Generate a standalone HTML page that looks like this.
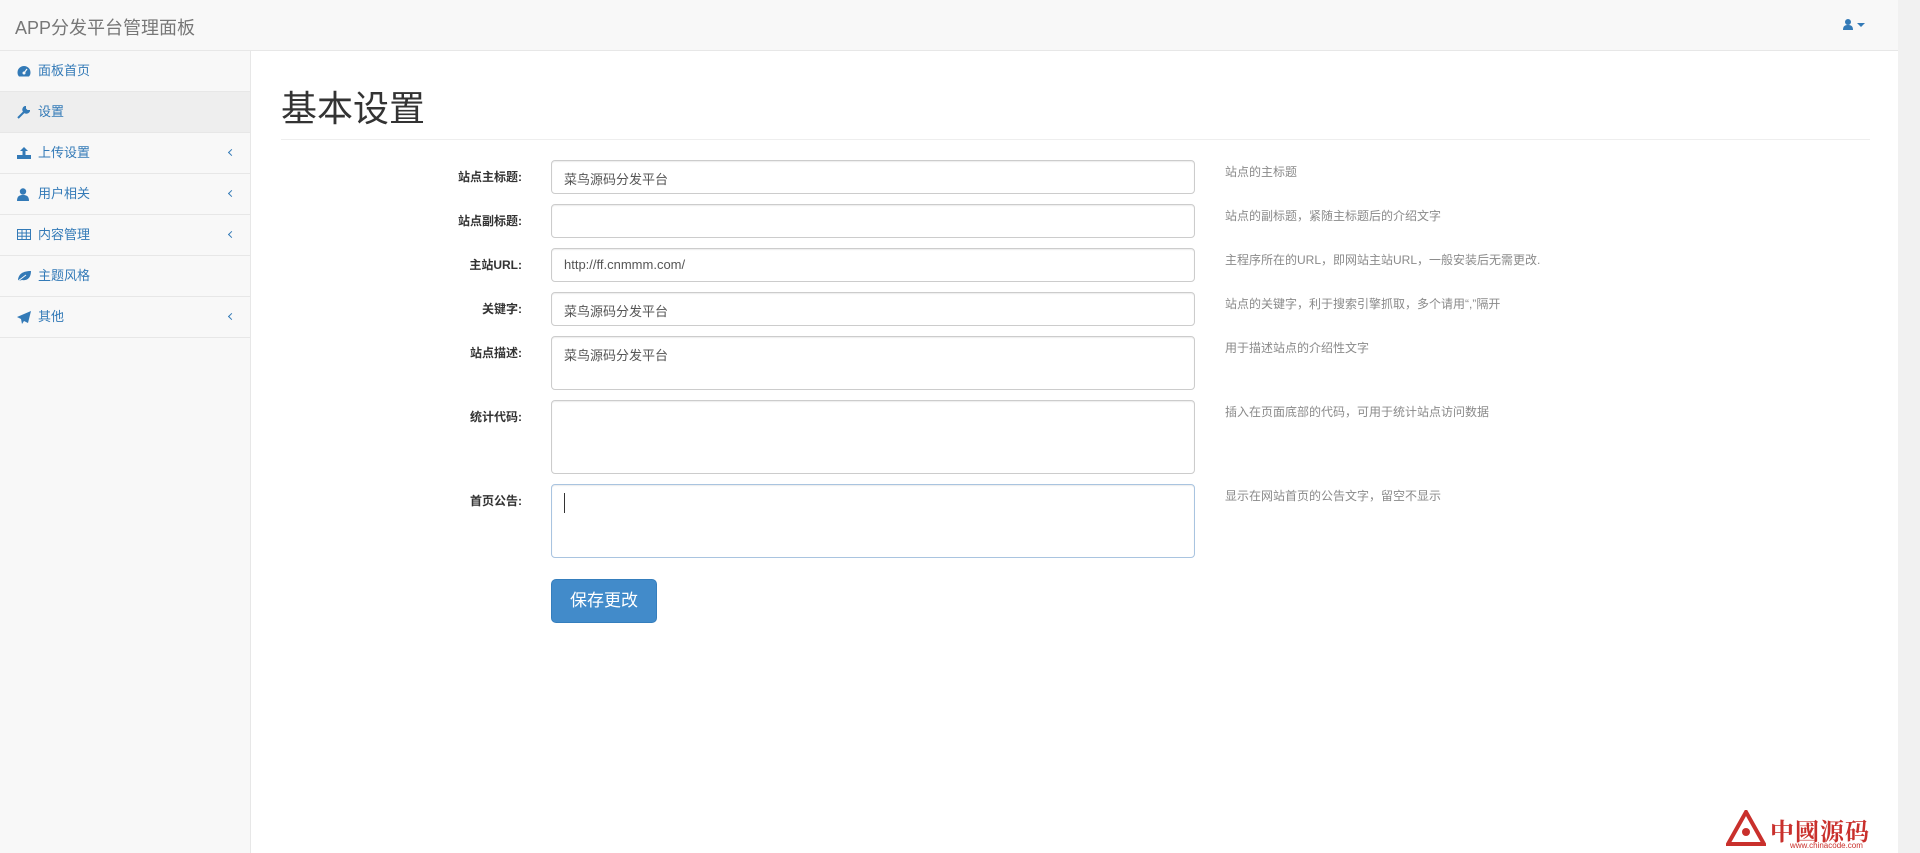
<!DOCTYPE html>
<html><head><meta charset="utf-8"><style>
*{box-sizing:border-box;margin:0;padding:0}
body{width:1920px;height:853px;overflow:hidden;background:#fff;font-family:"Liberation Sans","Noto Sans CJK SC",sans-serif;font-size:14px;color:#333;position:relative}
.nav{position:absolute;left:0;top:0;width:1898px;height:51px;background:#f8f8f8;border-bottom:1px solid #e7e7e7}
.brand{position:absolute;left:15px;top:14px;font-size:18px;color:#777}
.user{position:absolute;left:1843px;top:19px}
.side{position:absolute;left:0;top:51px;width:251px;height:802px;background:#f8f8f8;border-right:1px solid #e7e7e7}
.item{height:41px;border-bottom:1px solid #e7e7e7;color:#337ab7;font-size:13px;line-height:40px;padding-left:38px;position:relative}
.item.act{background:#eee}
.item svg{position:absolute;left:17px;top:14px}
.item .ar{position:absolute;left:229px;top:17px;width:5px;height:5px;border-left:1px solid #337ab7;border-bottom:1px solid #337ab7;transform:rotate(45deg)}
.sb{position:absolute;left:1898px;top:0;width:22px;height:853px;background:#f1f1f1}
h1{position:absolute;left:281px;top:88px;font-size:36px;font-weight:400;color:#333;line-height:42px}
.hr{position:absolute;left:281px;top:139px;width:1589px;border-top:1px solid #eee}
.lbl{position:absolute;width:200px;left:322px;text-align:right;font-weight:bold;font-size:12px;color:#333}
.in{position:absolute;left:551px;width:644px;border:1px solid #ccc;border-radius:4px;background:#fff;box-shadow:inset 0 1px 1px rgba(0,0,0,.075);padding:8px 12px;font-size:13px;color:#555}
.help{position:absolute;left:1225px;font-size:12px;color:#8a8a8a}
.btn{position:absolute;left:551px;top:579px;width:106px;height:44px;background:#428bca;border:1px solid #357ebd;border-radius:5px;color:#fff;font-size:17px;line-height:42px;text-align:center}
.wm{position:absolute;left:1770px;top:812px;color:#c9302c;font-size:24px;font-weight:bold;font-family:"Noto Serif CJK SC",serif;letter-spacing:1px}
.wm2{position:absolute;left:1790px;top:841px;color:#c9302c;font-size:8px}
</style></head><body>
<div class="nav"><div class="brand">APP分发平台管理面板</div>
<svg class="user" width="28" height="12" viewBox="0 0 28 12"><circle cx="5" cy="3" r="3" fill="#337ab7"/><path d="M0 11c0-4 2-5 5-5s5 1 5 5z" fill="#337ab7"/><path d="M14 4h8l-4 4z" fill="#337ab7"/></svg></div>
<div class="side">
<div class="item"><svg width="14" height="12" viewBox="0 0 14 12"><path d="M7 1a6.5 6.5 0 0 0-6.5 6.5c0 1.5.5 3 1.5 4h10c1-1 1.5-2.5 1.5-4A6.5 6.5 0 0 0 7 1z" fill="#337ab7"/><circle cx="7" cy="8" r="1.5" fill="#f8f8f8"/><path d="M7 8l3-4" stroke="#f8f8f8" stroke-width="1.2"/></svg>面板首页</div>
<div class="item act"><svg width="13" height="13" viewBox="0 0 13 13"><path d="M1 12l6-6M8 1a3 3 0 1 0 4 4l-2 0-2-2z" stroke="#337ab7" stroke-width="2" fill="#337ab7"/></svg>设置</div>
<div class="item"><svg width="14" height="12" viewBox="0 0 14 12"><path d="M7 0l4 4H8.5v4h-3V4H3z" fill="#337ab7"/><rect x="0" y="8" width="14" height="4" fill="#337ab7"/></svg>上传设置<span class="ar"></span></div>
<div class="item"><svg width="12" height="13" viewBox="0 0 12 13"><circle cx="6" cy="3.5" r="3.2" fill="#337ab7"/><path d="M0 13c0-5 2.5-6 6-6s6 1 6 6z" fill="#337ab7"/></svg>用户相关<span class="ar"></span></div>
<div class="item"><svg width="14" height="11" viewBox="0 0 14 11"><path d="M.5.5h13v10H.5zM.5 4h13M.5 7.3h13M5 .5v10M9.3.5v10" stroke="#337ab7" fill="none"/></svg>内容管理<span class="ar"></span></div>
<div class="item"><svg width="14" height="12" viewBox="0 0 14 12"><path d="M1 11C1 4 6 1 14 1c0 7-4 10-9 9z" fill="#337ab7"/><path d="M1 11l8-6" stroke="#f8f8f8"/></svg>主题风格</div>
<div class="item"><svg width="14" height="13" viewBox="0 0 14 13"><path d="M14 0L0 6l4 2 1 5 2-3 4 2z" fill="#337ab7"/></svg>其他<span class="ar"></span></div>
</div>
<div class="sb"></div>
<h1>基本设置</h1><div class="hr"></div>

<div class="lbl" style="top:168px">站点主标题:</div>
<div class="in" style="top:160px;height:34px">菜鸟源码分发平台</div>
<div class="help" style="top:163px">站点的主标题</div>

<div class="lbl" style="top:212px">站点副标题:</div>
<div class="in" style="top:204px;height:34px"></div>
<div class="help" style="top:207px">站点的副标题，紧随主标题后的介绍文字</div>

<div class="lbl" style="top:256px">主站URL:</div>
<div class="in" style="top:248px;height:34px">http://ff.cnmmm.com/</div>
<div class="help" style="top:251px">主程序所在的URL，即网站主站URL，一般安装后无需更改.</div>

<div class="lbl" style="top:300px">关键字:</div>
<div class="in" style="top:292px;height:34px">菜鸟源码分发平台</div>
<div class="help" style="top:295px">站点的关键字，利于搜索引擎抓取，多个请用“,”隔开</div>

<div class="lbl" style="top:344px">站点描述:</div>
<div class="in" style="top:336px;height:54px">菜鸟源码分发平台</div>
<div class="help" style="top:339px">用于描述站点的介绍性文字</div>

<div class="lbl" style="top:408px">统计代码:</div>
<div class="in" style="top:400px;height:74px"></div>
<div class="help" style="top:403px">插入在页面底部的代码，可用于统计站点访问数据</div>

<div class="lbl" style="top:492px">首页公告:</div>
<div class="in" style="top:484px;height:74px;border-color:#a9c4e0"><span style="display:inline-block;width:1px;height:20px;background:#333"></span></div>
<div class="help" style="top:487px">显示在网站首页的公告文字，留空不显示</div>

<div class="btn">保存更改</div>
<svg style="position:absolute;left:1726px;top:810px" width="40" height="36" viewBox="0 0 40 36"><path d="M20 2L38 34H2z" fill="none" stroke="#c9302c" stroke-width="4"/><circle cx="20" cy="22" r="4" fill="#c9302c"/></svg>
<div class="wm">中國源码</div>
<div class="wm2">www.chinacode.com</div>
</body></html>
